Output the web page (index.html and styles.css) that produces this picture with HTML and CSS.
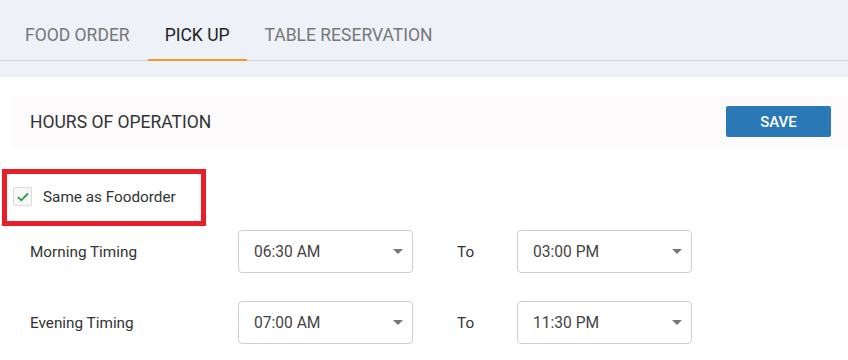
FILE: index.html
```html
<!DOCTYPE html>
<html>
<head>
    <title>Pick Up Settings</title>
    <link rel="stylesheet" href="styles.css">
</head>
<body>
<div class="top-area">
    <div class="tab-bar">
        <div class="tab">FOOD ORDER</div>
        <div class="tab active">PICK UP</div>
        <div class="tab">TABLE RESERVATION</div>
    </div>
</div>

<div class="content">
    <div class="panel">
        <span class="panel-title">HOURS OF OPERATION</span>
        <button class="save-btn">SAVE</button>
    </div>

    <div class="same-box">
        <span class="check">
            <svg width="12" height="10" viewBox="0 0 12 10"><path d="M1 5.2 L4.3 8.3 L11 1.5" fill="none" stroke="#2e9b45" stroke-width="1.8"/></svg>
        </span>
        <span class="same-label">Same as Foodorder</span>
    </div>

    <div class="timing-row">
        <span class="row-label">Morning Timing</span>
        <div class="select"><span>06:30 AM</span><i class="caret"></i></div>
        <span class="to">To</span>
        <div class="select"><span>03:00 PM</span><i class="caret"></i></div>
    </div>

    <div class="timing-row">
        <span class="row-label">Evening Timing</span>
        <div class="select"><span>07:00 AM</span><i class="caret"></i></div>
        <span class="to">To</span>
        <div class="select"><span>11:30 PM</span><i class="caret"></i></div>
    </div>
</div>
</body>
</html>
```

FILE: styles.css
```css
body {
    margin: 0;
    font-family: Roboto, "Liberation Sans", sans-serif;
    color: #333;
    background: #fff;
}

.top-area {
    background-color: #eef1f8;
    padding-bottom: 16px;
}

.tab-bar {
    display: flex;
    padding-left: 8px;
    height: 60px;
    border-bottom: 1px solid #cfcfd2;
}

.tab {
    padding: 0 17px;
    font-size: 17.5px;
    line-height: 70px;
    height: 60px;
    color: #777;
    margin-right: 1px;
    box-sizing: border-box;
}

.tab.active {
    color: #222;
    border-bottom: 2px solid #f5962f;
    height: 61px;
}

.content {
    padding: 18px 0 0 12px;
}

.panel {
    background-color: #fcfafb;
    height: 53px;
    display: flex;
    align-items: center;
    justify-content: space-between;
    padding: 0 17px 0 18px;
}

.panel-title {
    font-size: 17.5px;
    color: #333;
}

.save-btn {
    width: 105px;
    height: 31px;
    background-color: #2a78b5;
    color: #fff;
    border: none;
    border-radius: 2px;
    font-family: Roboto, "Liberation Sans", sans-serif;
    font-size: 15px;
    font-weight: 500;
}

.same-box {
    margin: 21px 0 0 -10px;
    width: 204px;
    height: 57px;
    box-sizing: border-box;
    border: 5px solid #e81f2a;
    display: flex;
    align-items: center;
    padding-left: 6px;
    padding-bottom: 2px;
}

.check {
    width: 17px;
    height: 17px;
    border: 1px solid #dcdcdc;
    background: #f7f7f7;
    border-radius: 2px;
    display: flex;
    align-items: center;
    justify-content: center;
    margin-right: 11px;
}

.same-label {
    font-size: 15.3px;
    color: #333;
}

.timing-row {
    display: flex;
    align-items: center;
    padding-left: 18px;
    margin-top: 4px;
    height: 43px;
}

.timing-row + .timing-row {
    margin-top: 28px;
}

.row-label {
    width: 208px;
    font-size: 15.3px;
    color: #333;
}

.select {
    width: 175px;
    height: 43px;
    box-sizing: border-box;
    border: 1px solid #cfcfcf;
    border-radius: 4px;
    display: flex;
    align-items: center;
    justify-content: space-between;
    padding: 0 9px 0 15px;
    font-size: 15.6px;
    color: #444;
}

.caret {
    width: 0;
    height: 0;
    border-left: 5px solid transparent;
    border-right: 5px solid transparent;
    border-top: 5px solid #777;
}

.to {
    width: 60px;
    padding-left: 44px;
    font-size: 15.3px;
    color: #333;
}
```
